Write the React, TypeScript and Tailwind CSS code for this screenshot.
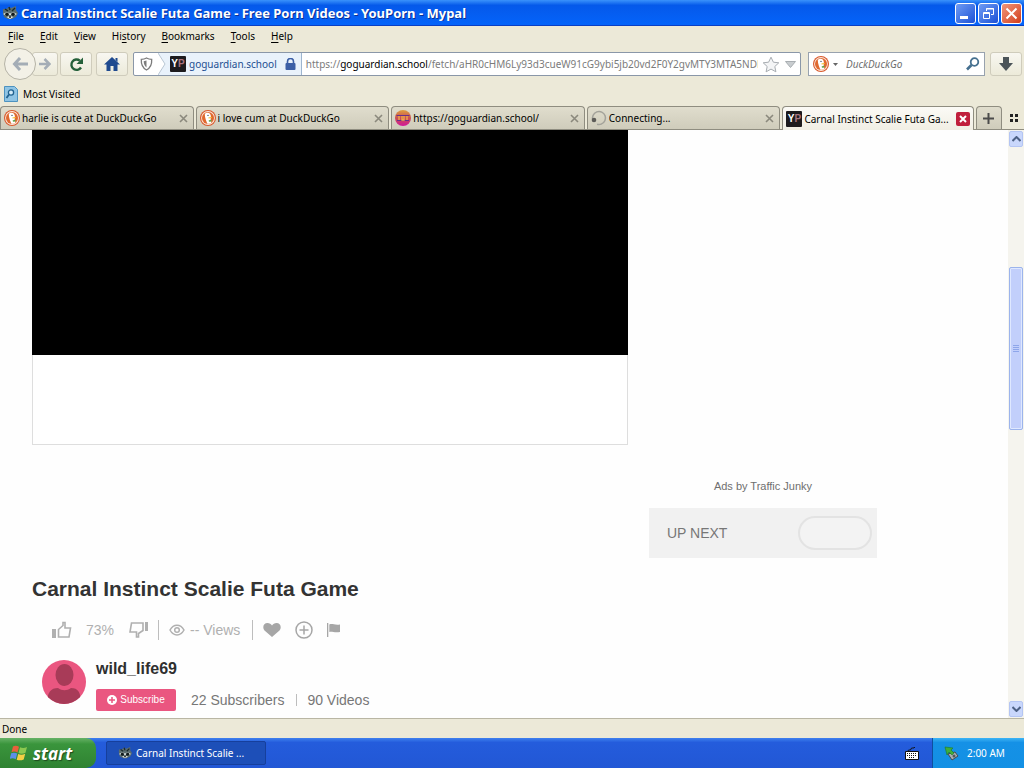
import { useState } from "react";

const DuckIcon = ({ size = 16 }: { size?: number }) => (
  <svg width={size} height={size} viewBox="0 0 16 16" className="shrink-0">
    <circle cx="8" cy="8" r="8" fill="#d9592b" />
    <circle cx="8" cy="8" r="6.9" fill="#fbe9df" />
    <circle cx="8" cy="8" r="6" fill="#e0692f" />
    <path
      d="M4.800 4.600c0-1.500 1.500-2.200 3-1.900 1.800.3 2.900 1.400 3 3 .1 1 .1 1.600-.2 2.200l.8 5.200c-1.200.8-2.800.9-4 .6C6.400 11.500 4.900 8 4.800 4.600z"
      fill="#fff"
    />
    <path d="M8.400 7.400l3.200-.5c.5.500 0 1-.8 1.200l-2.200.5z" fill="#f5c024" />
    <path d="M8.600 10.400l2.600-.8.400 1.800-2.600.4z" fill="#5da34a" />
    <circle cx="8" cy="5.400" r=".7" fill="#39506b" />
  </svg>
);

const YpIcon = () => (
  <span className="flex size-4 shrink-0 items-center justify-center rounded-[1px] bg-[#1d1b1e] font-['Liberation_Sans'] text-[10px] leading-none font-bold text-white">
    Y<span className="text-[#a8737f]">P</span>
  </span>
);

const GuardianIcon = () => (
  <svg width="16" height="16" viewBox="0 0 16 16" className="shrink-0">
    <defs>
      <linearGradient id="guardian" x1="0" y1="0" x2="0" y2="1">
        <stop offset="0" stopColor="#e0a040" />
        <stop offset=".5" stopColor="#c9504f" />
        <stop offset="1" stopColor="#d3179c" />
      </linearGradient>
    </defs>
    <circle cx="8" cy="8" r="8" fill="url(#guardian)" />
    <path d="M1.500 5.500h13M2 10.500h12" stroke="#6a2f8a" strokeWidth="1" />
    <path d="M4 6v4M7 6v4h2V6M12 6v4" fill="none" stroke="#f0b04a" strokeWidth="1.300" />
  </svg>
);

const SpinnerIcon = () => (
  <svg width="16" height="16" viewBox="0 0 16 16" className="shrink-0">
    <circle cx="8" cy="8" r="6.500" fill="none" stroke="#a3a29a" strokeWidth="1.500" strokeDasharray="34 7" transform="rotate(160 8 8)" />
    <circle cx="3" cy="10" r="2.300" fill="#5d5c58" />
  </svg>
);

const RaccoonIcon = ({ size = 16 }: { size?: number }) => (
  <svg width={size} height={size} viewBox="0 0 16 16" className="shrink-0">
    <path d="M1 4l3 0 3-2 2 1 5-2 0 4 2 3-2 4-4 2H6l-4-2-1-4z" fill="#5a6c6e" />
    <path d="M3 4l3 2M13 3l-3 3M7 2l1 3" stroke="#1b2a2c" strokeWidth="1.400" />
    <path d="M1 9l4-2 3 1.500L11 7l4 2-3 1.500-4-.5-4 .5z" fill="#d9e2df" />
    <circle cx="5" cy="9.300" r="1.800" fill="#111a1c" />
    <circle cx="11" cy="9.300" r="1.800" fill="#111a1c" />
    <path d="M4.500 12l3.500 2 3.500-2-3.500-1z" fill="#e8eeec" />
    <circle cx="8" cy="12" r="1" fill="#111" />
  </svg>
);

const Separator = ({ tall = false }: { tall?: boolean }) => (
  <span className={tall ? "h-5 w-px bg-[#bdbdbd]" : "h-3 w-px bg-[#bdbdbd]"} />
);

const menuItems = ["File", "Edit", "View", "History", "Bookmarks", "Tools", "Help"];
const accessKeys: Record<string, number> = { History: 2 };

const tabs = [
  { id: 1, title: "harlie is cute at DuckDuckGo", icon: <DuckIcon /> },
  { id: 2, title: "i love cum at DuckDuckGo", icon: <DuckIcon /> },
  { id: 3, title: "https://goguardian.school/", icon: <GuardianIcon /> },
  { id: 4, title: "Connecting...", icon: <SpinnerIcon /> },
  { id: 5, title: "Carnal Instinct Scalie Futa Ga...", icon: <YpIcon /> },
];

const navButton =
  "flex h-6 items-center justify-center rounded-[3px] border border-[#cfccbc] bg-linear-to-b from-[#f8f7f1] to-[#ecead9]";

const TitleBar = () => (
  <header className="flex h-[26px] shrink-0 items-center bg-linear-to-b from-[#3a92fb] via-[#0559ea] via-20% to-[#0464fb] pr-[2px] pl-[2px] shadow-[inset_0_-1px_0_#0a3fc4]">
    <RaccoonIcon />
    <h1 className="ml-[3px] flex-1 truncate font-['Noto_Sans'] text-[13px] font-bold text-white [text-shadow:1px_1px_0_#0a2f94]">
      Carnal Instinct Scalie Futa Game - Free Porn Videos - YouPorn - Mypal
    </h1>
    <div className="flex gap-[2px]">
      <button aria-label="Minimize" className="flex size-[21px] items-end rounded-[3px] border border-white bg-linear-to-br from-[#6f9bf3] to-[#1c4fd6] pb-1 pl-1">
        <span className="h-[3px] w-2 bg-white" />
      </button>
      <button aria-label="Restore" className="flex size-[21px] items-center justify-center rounded-[3px] border border-white bg-linear-to-br from-[#6f9bf3] to-[#1c4fd6]">
        <svg width="13" height="13" viewBox="0 0 13 13" fill="none" stroke="#fff">
          <path d="M4.500 4V1.500h7v6H9M4 2h8" />
          <path d="M1.500 5.500h6v6h-6zM1 6.500h7" />
        </svg>
      </button>
      <button aria-label="Close" className="flex size-[21px] items-center justify-center rounded-[3px] border border-white bg-linear-to-br from-[#f0957a] to-[#d13a14]">
        <svg width="13" height="13" viewBox="0 0 13 13" stroke="#fff" strokeWidth="2">
          <path d="M1.500 1.500l10 10M11.500 1.500l-10 10" />
        </svg>
      </button>
    </div>
  </header>
);

const MenuBar = () => (
  <nav className="flex h-5 shrink-0 items-center">
    {menuItems.map((item) => {
      const key = accessKeys[item] ?? 0;
      return (
        <button key={item} className="px-2">
          {item.slice(0, key)}
          <span className="underline underline-offset-2">{item[key]}</span>
          {item.slice(key + 1)}
        </button>
      );
    })}
  </nav>
);

const NavBar = () => {
  const [path, setPath] = useState("/fetch/aHR0cHM6Ly93d3cueW91cG9ybi5jb20vd2F0Y2gvMTY3MTA5NDEv");
  const [query, setQuery] = useState("");

  return (
    <div className="flex h-9 shrink-0 items-center pr-[2px] pl-1">
      <button aria-label="Back" className="z-10 flex size-8 items-center justify-center rounded-full border border-[#b5b3a6] bg-[#f3f1e7]">
        <svg width="16" height="14" viewBox="0 0 16 14" fill="none" stroke="#a4adb6" strokeWidth="3">
          <path d="M8 1L2.500 7 8 13M3 7h13" />
        </svg>
      </button>
      <button aria-label="Forward" className={`${navButton} -ml-1 w-[26px]`}>
        <svg width="12" height="12" viewBox="0 0 12 12" fill="none" stroke="#a4adb6" strokeWidth="2.500">
          <path d="M5.500 1l5 5-5 5M0 6h10" />
        </svg>
      </button>
      <button aria-label="Reload" className={`${navButton} ml-[2px] w-8`}>
        <svg width="15" height="15" viewBox="0 0 15 15">
          <path d="M12 10.500A5.200 5.200 0 1 1 10.800 3.600" fill="none" stroke="#25603a" strokeWidth="2.400" />
          <path d="M14 .5v6.500H7.500z" fill="#25603a" />
        </svg>
      </button>
      <button aria-label="Home" className={`${navButton} ml-1 w-8`}>
        <svg width="16" height="14" viewBox="0 0 16 14" fill="#1f4a8f">
          <path d="M8 0l8 7.500H13.500V14H9.500V9h-3v5h-4V7.500H0z" />
          <path d="M11.500 1h2v4l-2-2z" />
        </svg>
      </button>

      <div className="ml-[5px] flex h-6 min-w-0 flex-1 items-center rounded-[2px] border border-[#8a97a8] bg-white">
        <button aria-label="Site protection" className="flex h-full w-6 shrink-0 items-center justify-center">
          <svg width="13" height="14" viewBox="0 0 13 14">
            <path d="M6.500 1c1.700 1 3.300 1.300 5.200 1.300C12 7.500 10.500 11 6.500 13 2.500 11 1 7.500 1.300 2.300 3.200 2.300 4.800 2 6.500 1z" fill="#fff" stroke="#7c7c7c" strokeWidth="1.300" />
            <path d="M6.500 3.500v7C4.500 9 3.800 7 3.700 4.300z" fill="#7c7c7c" />
          </svg>
        </button>
        <div className="flex h-full shrink-0 items-center border-r border-[#9db5cf] bg-[#e9f2fb] pr-[5px] text-[#1d4f91]">
          <svg width="8" height="22" viewBox="0 0 8 22" className="mr-1">
            <path d="M0 0l7 11-7 11z" fill="#fff" />
            <path d="M0 0l7 11-7 11" fill="none" stroke="#b9c6d4" />
          </svg>
          <YpIcon />
          <span className="ml-[3px]">goguardian.school</span>
          <svg width="11" height="12" viewBox="0 0 11 12" className="ml-2">
            <path d="M2.500 6V3.500a3 3 0 0 1 6 0V6" fill="none" stroke="#3c5fa6" strokeWidth="1.600" />
            <rect x=".5" y="5" width="10" height="7" rx="1" fill="#3c5fa6" />
          </svg>
        </div>
        <label htmlFor="address" className="ml-1 text-[#7b7b7b]">
          https://<span className="text-black">goguardian.school</span>
        </label>
        <input
          id="address"
          value={path}
          onChange={(e) => setPath(e.target.value)}
          className="min-w-0 flex-1 text-[#7b7b7b] outline-none"
        />
        <button aria-label="Bookmark this page" className="ml-1">
          <svg width="18" height="17" viewBox="0 0 18 17">
            <path d="M9 1.200l2.400 5 5.400.6-4 3.700 1.100 5.300L9 13.100l-4.900 2.700 1.100-5.300-4-3.700 5.400-.6z" fill="#f4f5f6" stroke="#a8adb2" />
          </svg>
        </button>
        <button aria-label="Show history" className="mr-1 ml-[5px]">
          <svg width="11" height="7" viewBox="0 0 11 7">
            <path d="M.5.500h10l-5 6z" fill="#c9cdd0" stroke="#a9aeb2" />
          </svg>
        </button>
      </div>

      <div className="ml-[7px] flex h-6 w-[177px] items-center border border-[#98a2ae] bg-white px-1">
        <DuckIcon />
        <svg width="5" height="3" viewBox="0 0 5 3" className="ml-1">
          <path d="M0 0h5L2.500 3z" fill="#666" />
        </svg>
        <input
          aria-label="Search"
          placeholder="DuckDuckGo"
          value={query}
          onChange={(e) => setQuery(e.target.value)}
          className="ml-2 min-w-0 flex-1 italic outline-none placeholder:text-[#6f6f6f]"
        />
        <button aria-label="Go">
          <svg width="14" height="14" viewBox="0 0 14 14" fill="none" stroke="#45708f">
            <circle cx="8.500" cy="5" r="3.800" strokeWidth="1.800" />
            <path d="M5.500 8L1 12.500" strokeWidth="2.600" />
          </svg>
        </button>
      </div>
      <button aria-label="Downloads" className={`${navButton} ml-[5px] w-8`}>
        <svg width="14" height="14" viewBox="0 0 14 14" fill="#4b5459">
          <path d="M4 0h6v6h4l-7 8-7-8h4z" />
        </svg>
      </button>
    </div>
  );
};

const BookmarksBar = () => (
  <div className="flex h-6 shrink-0 items-center px-1">
    <button className="flex items-center gap-[5px]">
      <svg width="14" height="16" viewBox="0 0 14 16">
        <path d="M.5.500h10l3 3v12H.5z" fill="#8fc4e4" stroke="#4d92bf" />
        <circle cx="7" cy="6.500" r="2.600" fill="#d3ebf8" stroke="#20628f" strokeWidth="1.300" />
        <path d="M5 8.500L2.500 12" stroke="#20628f" strokeWidth="1.800" />
      </svg>
      Most Visited
    </button>
  </div>
);

const TabBar = () => {
  const [active, setActive] = useState(5);

  return (
    <div className="flex h-6 shrink-0 gap-[2px] border-b border-[#8f8d80]">
      {tabs.map((tab) => {
        const selected = tab.id === active;
        return (
          <div
            key={tab.id}
            className={
              selected
                ? "-mb-px flex min-w-0 flex-1 items-center rounded-t-[4px] border border-b-0 border-[#8f8d80] bg-linear-to-b from-[#fbfaf6] to-[#f1efe4] pr-[3px] pl-[3px]"
                : "flex min-w-0 flex-1 items-center rounded-t-[4px] border border-b-0 border-[#8f8d80] bg-linear-to-b from-[#e0ddcd] to-[#cfccbb] pr-[5px] pl-[3px]"
            }
          >
            <button onClick={() => setActive(tab.id)} className="flex min-w-0 flex-1 items-center gap-[2px]">
              {tab.icon}
              <span className="overflow-hidden whitespace-nowrap">{tab.title}</span>
            </button>
            {selected ? (
              <button aria-label="Close tab" className="flex size-[14px] shrink-0 items-center justify-center rounded-[2px] bg-[#c01f3c]">
                <svg width="8" height="8" viewBox="0 0 8 8" stroke="#fff" strokeWidth="2">
                  <path d="M1 1l6 6M7 1L1 7" />
                </svg>
              </button>
            ) : (
              <button aria-label="Close tab" className="shrink-0">
                <svg width="9" height="9" viewBox="0 0 9 9" stroke="#8b897d" strokeWidth="1.600">
                  <path d="M1 1l7 7M8 1L1 8" />
                </svg>
              </button>
            )}
          </div>
        );
      })}
      <button aria-label="New tab" className="flex w-[26px] items-center justify-center rounded-t-[4px] border border-b-0 border-[#8f8d80] bg-linear-to-b from-[#e0ddcd] to-[#cfccbb]">
        <svg width="11" height="11" viewBox="0 0 11 11" stroke="#4b4b4b" strokeWidth="2">
          <path d="M5.500 0v11M0 5.500h11" />
        </svg>
      </button>
      <button aria-label="Tab groups" className="flex w-5 items-center justify-center">
        <svg width="8" height="8" viewBox="0 0 8 8" fill="#222">
          <path d="M0 0h3v3H0zM5 0h3v3H5zM0 5h3v3H0zM5 5h3v3H5z" />
        </svg>
      </button>
    </div>
  );
};

const VideoActions = () => (
  <div className="mt-[17px] flex h-5 items-center pl-5 text-sm text-[#b0b0b0]">
    <button aria-label="Like">
      <svg width="20" height="18" viewBox="0 0 20 18">
        <path d="M0 8h4v9H0z" fill="#b0b0b0" />
        <path d="M6.500 16V8.500l4.500-4V1.500h2V7h5.500l-1.500 9z" fill="none" stroke="#b0b0b0" strokeWidth="1.600" />
      </svg>
    </button>
    <span className="ml-[14px]">73%</span>
    <button aria-label="Dislike" className="ml-[15px]">
      <svg width="20" height="18" viewBox="0 0 20 18">
        <path d="M16 1h3v9h-3z" fill="#b0b0b0" />
        <path d="M14 2v7.500l-4.500 3V16h-2v-5H1l1.500-9z" fill="none" stroke="#b0b0b0" strokeWidth="1.600" />
      </svg>
    </button>
    <span className="ml-[9px] flex">
      <Separator tall />
    </span>
    <svg width="16" height="12" viewBox="0 0 16 12" fill="none" stroke="#b0b0b0" strokeWidth="1.500" className="ml-[10px]">
      <path d="M1 6c3.500-6.500 10.500-6.500 14 0-3.500 6.500-10.500 6.500-14 0z" />
      <circle cx="8" cy="6" r="2.300" />
    </svg>
    <span className="ml-[5px]">-- Views</span>
    <span className="ml-3 flex">
      <Separator tall />
    </span>
    <button aria-label="Favorite" className="ml-[10px]">
      <svg width="18" height="16" viewBox="0 0 18 16">
        <path d="M9 15L1.500 8.500C-1 5.500.5 1 4.500 1 6.500 1 8 2 9 3.500 10 2 11.500 1 13.500 1c4 0 5.500 4.500 3 7.500z" fill="#a6a6a6" />
      </svg>
    </button>
    <button aria-label="Add to playlist" className="ml-[14px]">
      <svg width="18" height="18" viewBox="0 0 18 18" fill="none" stroke="#a6a6a6" strokeWidth="1.500">
        <circle cx="9" cy="9" r="8" />
        <path d="M9 4.500v9M4.500 9h9" />
      </svg>
    </button>
    <button aria-label="Report" className="ml-[14px]">
      <svg width="14" height="14" viewBox="0 0 14 14" fill="#a6a6a6">
        <path d="M0 0h1.300v14H0zM2.300 1.500c3-1.500 5 1 10.700 0v7.500c-5.500 1.200-8-1-10.700 0z" />
      </svg>
    </button>
  </div>
);

const Uploader = () => (
  <div className="mt-4 flex pl-[10px]">
    <svg width="44" height="44" viewBox="0 0 44 44" className="mt-1 shrink-0">
      <defs>
        <clipPath id="avatar">
          <circle cx="22" cy="22" r="22" />
        </clipPath>
      </defs>
      <g clipPath="url(#avatar)">
        <path d="M0 0h44v44H0z" fill="#ea5680" />
        <ellipse cx="22.500" cy="15" rx="9" ry="11" fill="#a83b58" />
        <path d="M5 44c0-12 4-16 11-16 4 3 9 3 13 0 7 0 10 4 10 16z" fill="#a83b58" />
      </g>
    </svg>
    <div className="ml-[10px]">
      <a href="#uploader" className="block pt-px text-base leading-6 font-bold text-[#2f2f2f]">
        wild_life69
      </a>
      <div className="mt-2 flex h-[22px] items-center text-sm text-[#777]">
        <button className="mr-[15px] flex h-[22px] w-20 items-center justify-center gap-[3px] rounded-[2px] bg-[#ea5680] text-[10px] text-white">
          <svg width="10" height="10" viewBox="0 0 10 10">
            <circle cx="5" cy="5" r="5" fill="#fff" />
            <path d="M5 2v6M2 5h6" stroke="#ea5680" strokeWidth="1.500" />
          </svg>
          Subscribe
        </button>
        <span className="mr-3">22 Subscribers</span>
        <Separator />
        <span className="ml-[10px]">90 Videos</span>
      </div>
    </div>
  </div>
);

const ScrollBar = () => (
  <div className="flex w-4 shrink-0 flex-col bg-[#f5f4ee] px-px">
    <button aria-label="Scroll up" className="my-px flex h-4 items-center justify-center rounded-[2px] border border-[#b4c5f3] bg-[#c9d7fc]">
      <svg width="9" height="6" viewBox="0 0 9 6" fill="none" stroke="#4d6185" strokeWidth="2">
        <path d="M.5 5l4-4 4 4" />
      </svg>
    </button>
    <div className="flex-[119]" />
    <div className="flex flex-[162] flex-col items-center justify-center gap-px rounded-[2px] border border-[#9cb4ec] bg-[#c2cffb] shadow-[inset_0_0_0_1px_#dfe8ff]">
      <span className="h-px w-[6px] bg-[#8ea6ea]" />
      <span className="h-px w-[6px] bg-[#8ea6ea]" />
      <span className="h-px w-[6px] bg-[#8ea6ea]" />
      <span className="h-px w-[6px] bg-[#8ea6ea]" />
    </div>
    <div className="flex-[271]" />
    <button aria-label="Scroll down" className="my-px flex h-4 items-center justify-center rounded-[2px] border border-[#b4c5f3] bg-[#c9d7fc]">
      <svg width="9" height="6" viewBox="0 0 9 6" fill="none" stroke="#4d6185" strokeWidth="2">
        <path d="M.5 1l4 4 4-4" />
      </svg>
    </button>
  </div>
);

const Page = () => (
  <div className="flex min-h-0 flex-1 overflow-hidden bg-[#fefefe]">
    <main className="min-w-0 flex-1 overflow-hidden pl-8 font-['Liberation_Sans',sans-serif]">
      <div className="grid grid-cols-[596px_228px] items-start gap-[21px]">
        <div className="border border-t-0 border-[#dedede] bg-white">
          <div className="-mx-px h-[225px] bg-black" />
          <div className="h-[89px]" />
        </div>
        <aside className="pt-[348px]">
          <p className="text-center text-[11px] leading-4 text-[#6f6f6f]">Ads by Traffic Junky</p>
          <div className="mt-[14px] flex h-[50px] items-center justify-between bg-[#f1f1f1] pr-[5px] pl-[18px]">
            <label htmlFor="autoplay" className="text-sm text-[#777]">
              UP NEXT
            </label>
            <input
              id="autoplay"
              type="checkbox"
              className="h-[34px] w-[74px] appearance-none rounded-full border-2 border-[#e3e3e3] bg-[#f3f3f3]"
            />
          </div>
        </aside>
      </div>
      <h2 className="mt-[17px] text-[21px] leading-7 font-bold text-[#333]">Carnal Instinct Scalie Futa Game</h2>
      <VideoActions />
      <Uploader />
    </main>
    <ScrollBar />
  </div>
);

const TaskBar = () => (
  <footer className="flex h-[30px] shrink-0 items-stretch bg-linear-to-b from-[#3f80ee] via-[#245cdc] via-15% to-[#2257d5] text-white">
    <button className="flex w-24 items-center gap-1 rounded-r-[10px] bg-linear-to-b from-[#66b266] via-[#3a953c] via-20% to-[#2f8232] pl-[10px] font-['Open_Sans'] text-[17px] leading-none font-bold italic [text-shadow:1px_1px_1px_#1d4a1d]">
      <svg width="19" height="18" viewBox="0 0 19 18">
        <path d="M3 2.500c2-1 4-.8 6 .3L7.500 8.500c-2-1-4-1.300-6-.3z" fill="#e8603c" />
        <path d="M10 3.300c2 1 4.500 1 7-.2l-1.500 5.700c-2.500 1-5 1.200-7 .2z" fill="#8cc850" />
        <path d="M1.200 9.300c2-1 4-.8 6 .3l-1.500 5.600c-2-1-4-1.200-6-.2z" fill="#5c8fe8" />
        <path d="M8.200 10c2 1 4.500 1 7-.2l-1.500 5.700c-2.500 1-5 1.200-7 .2z" fill="#f5cf45" />
      </svg>
      start
    </button>
    <button className="my-[3px] ml-[10px] flex w-40 items-center gap-1 rounded-[2px] border border-[#163f9c] bg-[#1d4fb8] pl-[11px]">
      <RaccoonIcon size={14} />
      Carnal Instinct Scalie ...
    </button>
    <div className="ml-auto flex items-center pr-[13px]">
      <svg width="14" height="13" viewBox="0 0 14 13">
        <path d="M3 4c0-2 3 0 3-2s3 0 4-2" fill="none" stroke="#111" />
        <path d="M.5 4.500h13v8H.5z" fill="#fff" stroke="#111" />
        <path d="M2 6.500h10M2 8.500h10M4 10.500h6" stroke="#111" strokeDasharray="1 1" />
      </svg>
    </div>
    <div className="flex w-[92px] items-center gap-2 border-l border-[#0f4f9f] bg-linear-to-b from-[#3bb4f5] via-[#1591e6] via-15% to-[#1390e4] pl-[11px]">
      <svg width="15" height="15" viewBox="0 0 15 15">
        <path d="M4 8l7-2 3 4-6 4z" fill="#aab0b4" stroke="#444b50" />
        <path d="M1 1l8 1-2 2 3 3-2 2-3-3-2 3z" fill="#3fae3c" stroke="#1f7a22" strokeWidth=".6" />
        <circle cx="10" cy="10" r="1.500" fill="#52595e" />
      </svg>
      <time>2:00 AM</time>
    </div>
  </footer>
);

const App = () => {
  return (
    <div className="flex h-screen flex-col bg-[#ece9d8] font-['Noto_Sans',sans-serif] text-[10px] leading-4 text-black">
      <TitleBar />
      <MenuBar />
      <NavBar />
      <BookmarksBar />
      <TabBar />
      <Page />
      <div className="flex h-5 shrink-0 items-center border-t border-[#b9b6a4] px-[2px]">Done</div>
      <TaskBar />
    </div>
  );
};

export default App;
